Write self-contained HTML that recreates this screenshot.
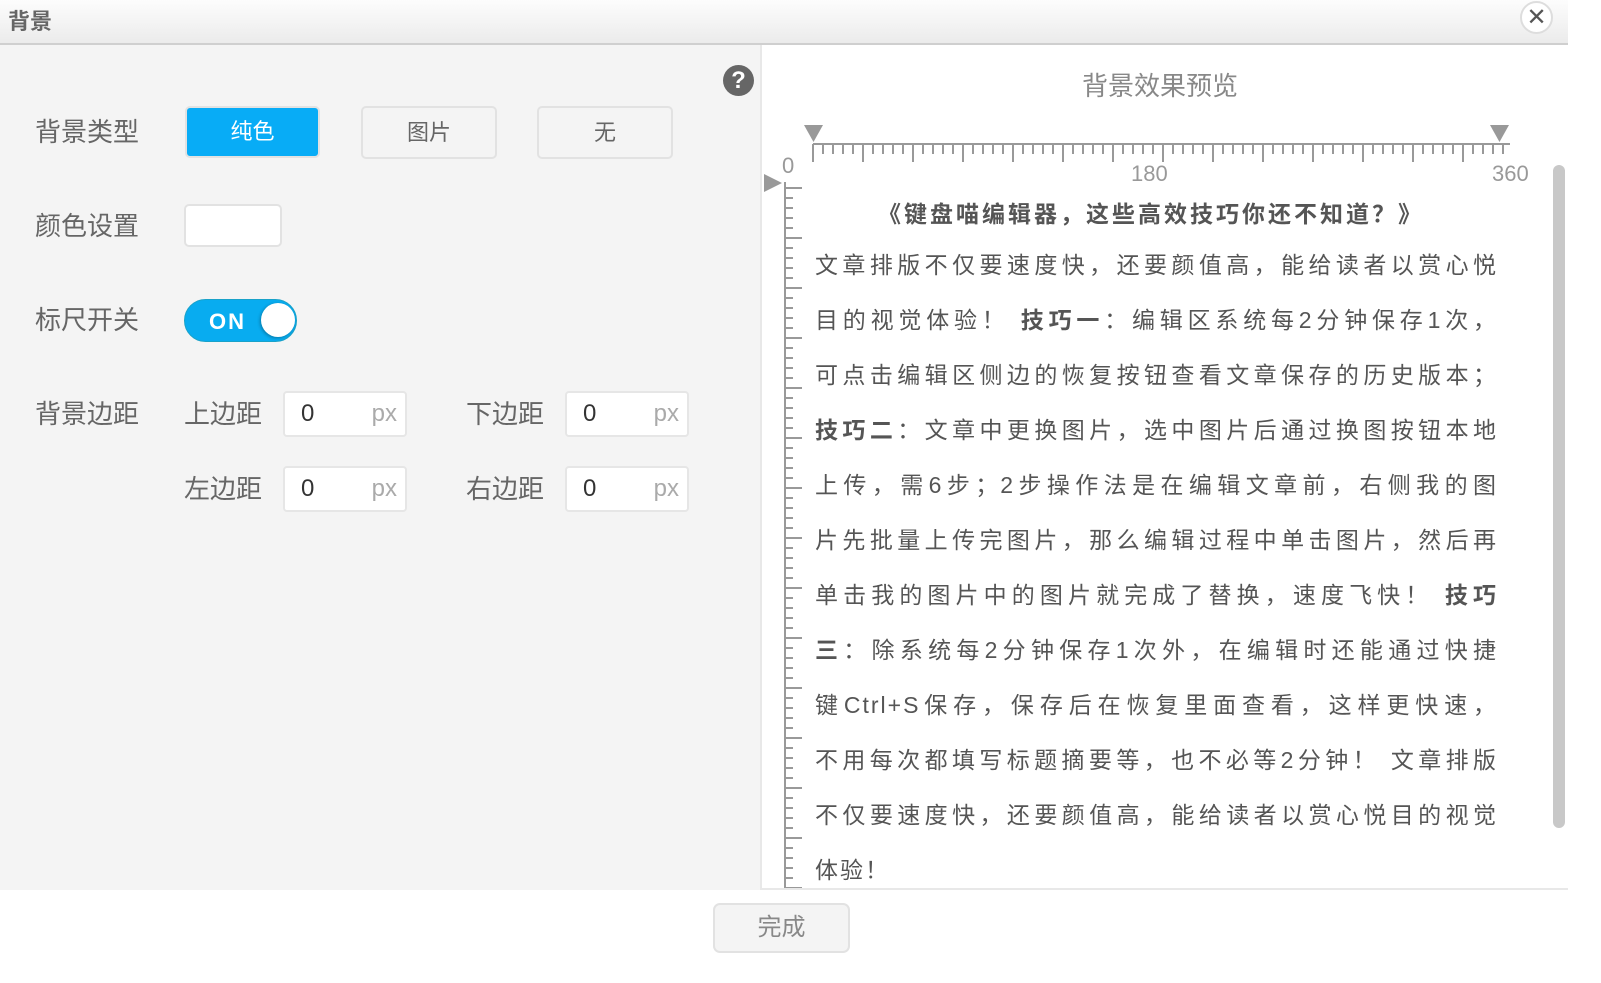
<!DOCTYPE html>
<html><head><meta charset="utf-8"><style>
*{margin:0;padding:0;box-sizing:border-box}
body{width:1601px;height:983px;position:relative;background:#fff;font-family:"Liberation Sans","Noto Sans CJK SC",sans-serif;overflow:hidden;color:#666}
.a{position:absolute}
.hdr{left:0;top:0;width:1568px;height:45px;background:linear-gradient(#fdfdfd,#ebebeb);border-bottom:2px solid #cfcfcf}
.left{left:0;top:45px;width:762px;height:845px;background:#f4f4f4;border-right:2px solid #e8e8e8}
.lbl{font-size:26px;color:#666;line-height:30px}
.btn{border:2px solid #e2e2e2;border-radius:5px;background:#f4f4f4;font-size:22px;color:#666;text-align:center}
.inp{background:#fff;border:2px solid #e6e6e6;border-radius:4px;height:46px;width:124px;font-size:24px;line-height:42px}
.inp b{font-weight:normal;color:#333;position:absolute;left:16px}
.inp i{font-style:normal;color:#aaa;position:absolute;right:8px}
.ln{left:815px;width:683px;font-size:23px;line-height:30px;color:#555;text-align:justify;text-align-last:justify;letter-spacing:2px;white-space:nowrap}
.ln strong{color:#555}
</style></head><body>
<div class="a hdr"></div>
<div class="a" style="left:8px;top:4px;font-size:22px;font-weight:bold;color:#666">背景</div>
<div class="a" style="left:1520px;top:1px;width:33px;height:33px;border-radius:50%;border:2px solid #ddd;background:#fff;text-align:center;font:bold 24px/29px 'DejaVu Sans',sans-serif;color:#555">✕</div>
<div class="a left"></div>
<div class="a" style="left:723px;top:65px;width:31px;height:31px;border-radius:50%;background:#666;color:#fff;font:bold 24px/31px 'Liberation Sans';text-align:center">?</div>

<div class="a lbl" style="left:35px;top:117px">背景类型</div>
<div class="a btn" style="left:185px;top:106px;width:135px;height:52px;background:#08acf6;border-color:#e2e2e2;color:#fff;line-height:48px">纯色</div>
<div class="a btn" style="left:361px;top:106px;width:136px;height:53px;line-height:49px">图片</div>
<div class="a btn" style="left:537px;top:106px;width:136px;height:53px;line-height:49px">无</div>

<div class="a lbl" style="left:35px;top:211px">颜色设置</div>
<div class="a" style="left:184px;top:204px;width:98px;height:43px;background:#fff;border:2px solid #e2e2e2;border-radius:5px"></div>

<div class="a lbl" style="left:35px;top:305px">标尺开关</div>
<div class="a" style="left:184px;top:299px;width:113px;height:43px;border-radius:22px;background:#08acf0;border:1px solid #19a2c9"></div>
<div class="a" style="left:209px;top:308px;color:#fff;font:bold 22px/28px 'Liberation Sans';letter-spacing:2px">ON</div>
<div class="a" style="left:261px;top:303px;width:34px;height:34px;border-radius:50%;background:#fff;box-shadow:-1px 1px 3px rgba(0,0,0,.3)"></div>

<div class="a lbl" style="left:35px;top:399px">背景边距</div>
<div class="a lbl" style="left:184px;top:399px">上边距</div>
<div class="a inp" style="left:283px;top:391px"><b>0</b><i>px</i></div>
<div class="a lbl" style="left:466px;top:399px">下边距</div>
<div class="a inp" style="left:565px;top:391px"><b>0</b><i>px</i></div>
<div class="a lbl" style="left:184px;top:474px">左边距</div>
<div class="a inp" style="left:283px;top:466px"><b>0</b><i>px</i></div>
<div class="a lbl" style="left:466px;top:474px">右边距</div>
<div class="a inp" style="left:565px;top:466px"><b>0</b><i>px</i></div>

<div class="a" style="left:1082px;top:66px;font-size:26px;color:#888">背景效果预览</div>
<svg class="a" style="left:762px;top:110px" width="800" height="780">
<g fill="#999">
<polygon points="42,15 61,15 51.5,32"/>
<polygon points="728,15 747,15 737.5,32"/>
<polygon points="2,64 2,82 20,73"/>
</g>
<g stroke="#999" stroke-width="2" fill="none">
<line x1="51" y1="34" x2="748" y2="34"/>
<line x1="23" y1="72" x2="23" y2="780"/>
</g>
<g stroke="#999" stroke-width="2" id="ticks"></g>
<g fill="#999" font-family="Liberation Sans" font-size="22"><text x="20" y="63">0</text><text x="369" y="71">180</text><text x="730" y="71">360</text></g>
</svg>
<div class="a" style="left:1553px;top:165px;width:12px;height:663px;border-radius:6px;background:#c8c8c8"></div>

<div class="a" style="left:878px;top:195px;font-size:23px;font-weight:bold;color:#555;letter-spacing:3px">《键盘喵编辑器，这些高效技巧你还不知道？》</div>
<div class="a ln" style="top:250px">文章排版不仅要速度快，还要颜值高，能给读者以赏心悦</div>
<div class="a ln" style="top:305px">目的视觉体验！ <strong>技巧一</strong>：编辑区系统每2分钟保存1次，</div>
<div class="a ln" style="top:360px">可点击编辑区侧边的恢复按钮查看文章保存的历史版本；</div>
<div class="a ln" style="top:415px"><strong>技巧二</strong>：文章中更换图片，选中图片后通过换图按钮本地</div>
<div class="a ln" style="top:470px">上传，需6步；2步操作法是在编辑文章前，右侧我的图</div>
<div class="a ln" style="top:525px">片先批量上传完图片，那么编辑过程中单击图片，然后再</div>
<div class="a ln" style="top:580px">单击我的图片中的图片就完成了替换，速度飞快！ <strong>技巧</strong></div>
<div class="a ln" style="top:635px"><strong>三</strong>：除系统每2分钟保存1次外，在编辑时还能通过快捷</div>
<div class="a ln" style="top:690px">键Ctrl+S保存，保存后在恢复里面查看，这样更快速，</div>
<div class="a ln" style="top:745px">不用每次都填写标题摘要等，也不必等2分钟！ 文章排版</div>
<div class="a ln" style="top:800px">不仅要速度快，还要颜值高，能给读者以赏心悦目的视觉</div>
<div class="a ln" style="top:855px;text-align-last:left">体验！</div>

<div class="a" style="left:762px;top:888px;width:806px;height:2px;background:#e8e8e8"></div>
<div class="a btn" style="left:713px;top:903px;width:137px;height:50px;line-height:46px;font-size:24px;color:#888;border-radius:7px">完成</div>
<script>
var g=document.getElementById('ticks'),s='';
for(var i=0;i<=69;i++){var x=51+i*10;s+='<line x1="'+x+'" y1="34" x2="'+x+'" y2="'+(i%5==0?52:44)+'"/>';}
for(var j=0;j<=70;j++){var y=78+j*10;if(y>780)break;s+='<line x1="23" y1="'+y+'" x2="'+(j%5==0?40:31)+'" y2="'+y+'"/>';}
g.innerHTML=s;
</script>
</body></html>
